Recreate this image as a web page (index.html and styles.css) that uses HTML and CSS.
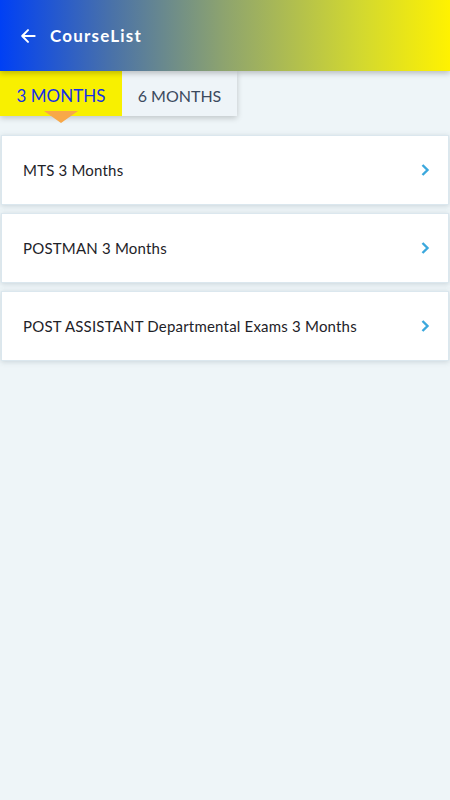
FILE: index.html
```html
<!DOCTYPE html>
<html lang="en">
<head>
    <meta charset="UTF-8">
    <meta name="viewport" content="width=device-width, initial-scale=1.0">
    <title>CourseList</title>
    <link rel="stylesheet" href="styles.css">
</head>
<body>

<div class="toolbar">
    <svg class="back" width="20" height="20" viewBox="0 0 24 24">
        <path d="M20 12H5M12 5l-7 7 7 7" fill="none" stroke="#fff" stroke-width="2.4" stroke-linecap="round" stroke-linejoin="round"/>
    </svg>
    <span class="title">CourseList</span>
</div>

<!-- Tabs -->
<div class="tabs">
    <div class="tab active">3 MONTHS</div>
    <div class="tab">6 MONTHS</div>
</div>

<div class="course-list">
    <div class="course">
        <span>MTS 3 Months</span>
        <svg class="chevron" width="10" height="14" viewBox="0 0 10 14"><path d="M2.5 2l5 5-5 5" fill="none" stroke="#3ba8dd" stroke-width="2.4"/></svg>
    </div>
    <div class="course">
        <span>POSTMAN 3 Months</span>
        <svg class="chevron" width="10" height="14" viewBox="0 0 10 14"><path d="M2.5 2l5 5-5 5" fill="none" stroke="#3ba8dd" stroke-width="2.4"/></svg>
    </div>
    <div class="course">
        <span>POST ASSISTANT Departmental Exams 3 Months</span>
        <svg class="chevron" width="10" height="14" viewBox="0 0 10 14"><path d="M2.5 2l5 5-5 5" fill="none" stroke="#3ba8dd" stroke-width="2.4"/></svg>
    </div>
</div>

</body>
</html>
```

FILE: styles.css
```css
* {
    margin: 0;
    padding: 0;
    box-sizing: border-box;
}

body, html {
    width: 100%;
    height: 100%;
    font-family: "Lato", "Open Sans", sans-serif;
    background-color: #eef5f8;
}

.toolbar {
    height: 71px;
    display: flex;
    align-items: center;
    padding-left: 18px;
    background: linear-gradient(to right, #0040f5 0%, #4a72a8 25%, #8ea46e 50%, #d2d830 80%, #fff200 100%);
    box-shadow: 0 2px 6px rgba(0, 0, 0, 0.25);
    position: relative;
    z-index: 2;
}

.back {
    margin-right: 12px;
}

.title {
    color: #fff;
    font-size: 17px;
    font-weight: bold;
    letter-spacing: 1.2px;
}

.tabs {
    display: flex;
    width: 237px;
    box-shadow: 0 2px 6px rgba(0, 0, 0, 0.2);
    position: relative;
    z-index: 1;
}

.tab {
    height: 45px;
    display: flex;
    align-items: center;
    justify-content: center;
    padding-top: 3px;
    font-size: 16px;
    color: #3b4a5e;
    background-color: #eef4f8;
    width: 115px;
}

.tab.active {
    width: 122px;
    font-size: 17px;
    background-color: #f8f000;
    color: #1530e6;
    position: relative;
}

.tab.active::after {
    content: '';
    position: absolute;
    left: 44px;
    top: 40px;
    border-left: 17px solid transparent;
    border-right: 17px solid transparent;
    border-top: 12px solid #f8a848;
}

.course-list {
    padding: 19px 1px 0 1px;
    display: flex;
    flex-direction: column;
    gap: 8px;
}

.course {
    height: 70px;
    display: flex;
    align-items: center;
    justify-content: space-between;
    padding: 0 18px 0 21px;
    background-color: #fff;
    border: 1px solid #dbe7ee;
    box-shadow: 0 1px 5px rgba(120, 140, 150, 0.3);
    font-size: 15px;
    letter-spacing: 0.2px;
    color: #1e2228;
}
```
